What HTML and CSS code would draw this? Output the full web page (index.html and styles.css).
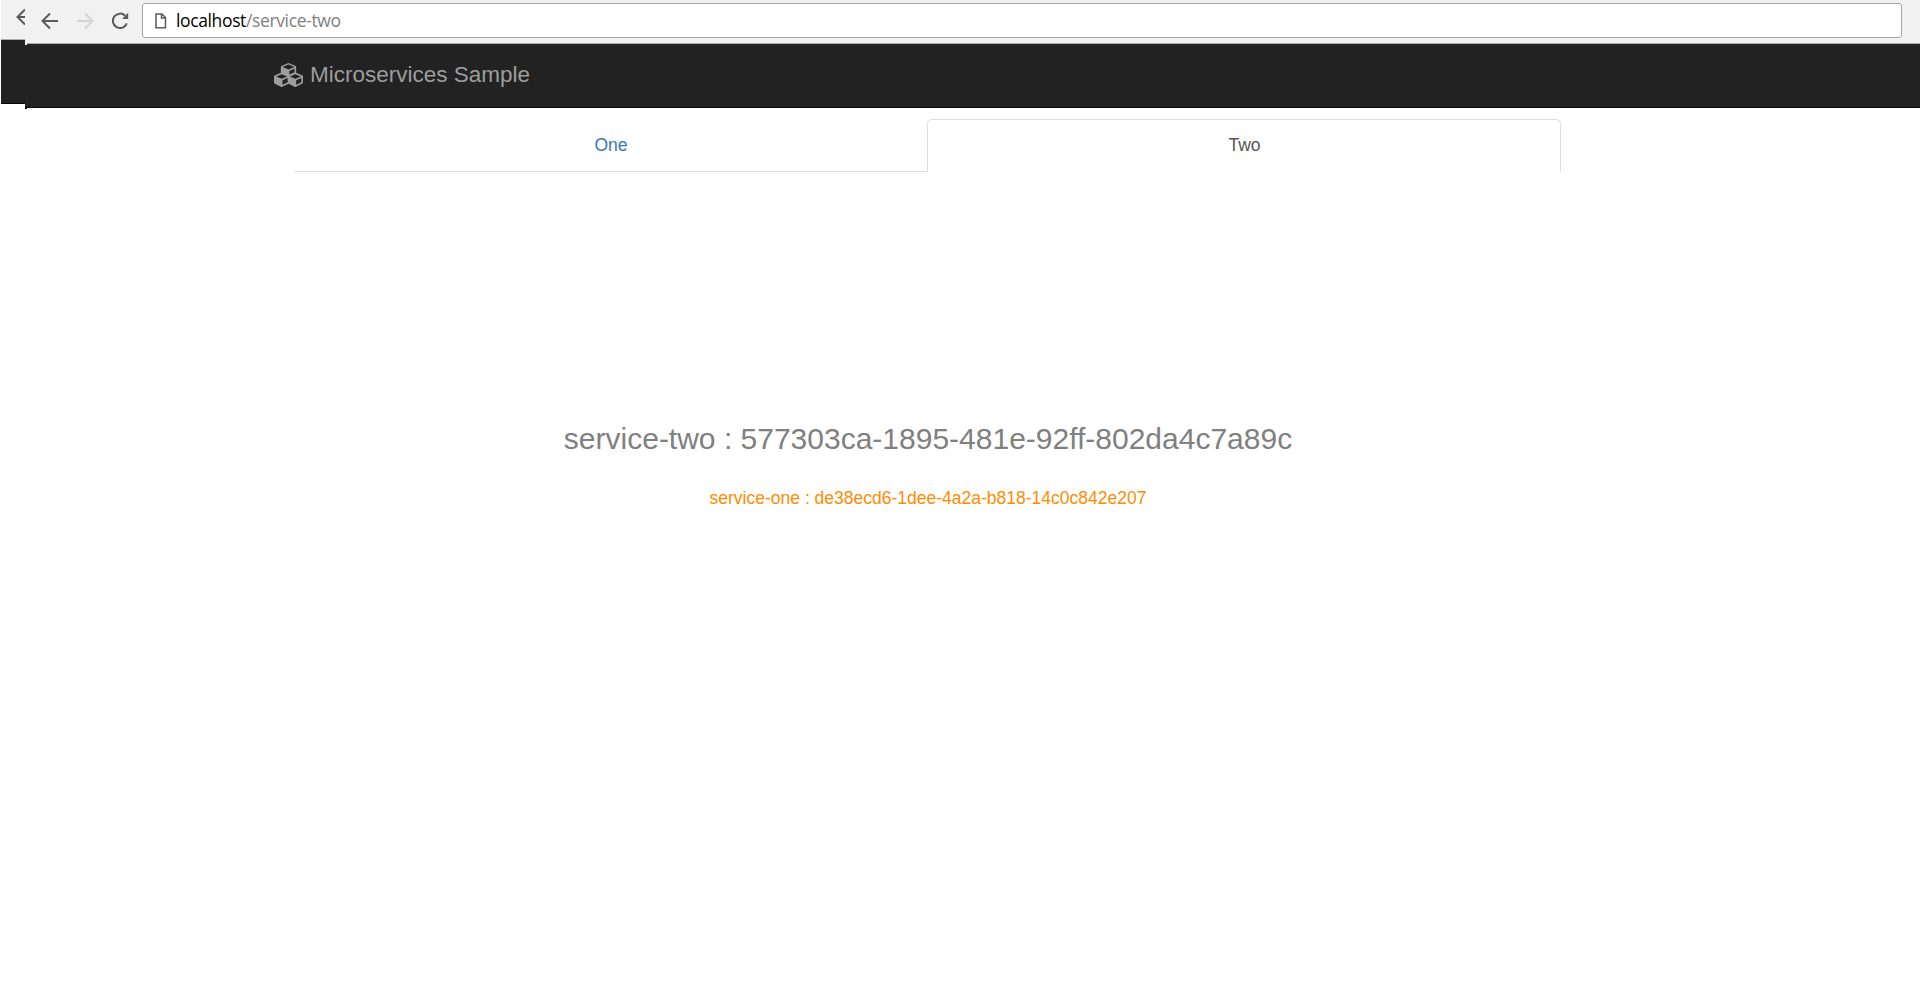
FILE: index.html
```html
<!DOCTYPE html>
<html lang="en">
<head>
<meta charset="utf-8">
<title>Microservices Sample</title>
<link rel="stylesheet" href="styles.css">
</head>
<body>
<header class="toolbar">
  <svg class="back" width="18" height="18" viewBox="0 0 18 18"><path d="M17 9H2M9 1.5L1.5 9L9 16.5"/></svg>
  <svg class="forward" width="18" height="18" viewBox="0 0 18 18"><path d="M1 9H16M9 1.5L16.5 9L9 16.5"/></svg>
  <svg class="reload" width="18" height="18" viewBox="0 0 18 18"><path d="M14.2 3.8A7.2 7.2 0 1 0 15.8 11.3"/><path class="solid" d="M17.2 0.8V7H11Z"/></svg>
  <div class="address">
    <svg class="page" width="12" height="16" viewBox="0 0 12 16"><path d="M1 1H7L10.5 4.5V14.8H1ZM6.5 1V5H10.5"/></svg>
    <span class="url">localhost<span class="path">/service-two</span></span>
  </div>
</header>
<nav class="navbar">
  <svg class="cubes" width="29" height="24" viewBox="0 0 2176 1792" preserveAspectRatio="none"><path fill-rule="evenodd" d="M640 1632l384-192v-314l-384 164v342zM576 1178l404-173-404-173-404 173zM1664 1632l384-192v-314l-384 164v342zM1600 1178l404-173-404-173-404 173zM1152 861l384-165v-266l-384 164v267zM1088 482l441-189-441-189-441 189zM2176 1024v416q0 36-19 67t-52 47l-448 224q-25 14-57 14t-57-14l-448-224q-5-2-7-4-2 2-7 4l-448 224q-25 14-57 14t-57-14l-448-224q-33-16-52-47t-19-67v-416q0-38 21.5-70t56.5-48l434-186v-400q0-38 21.5-70t56.5-48l448-192q23-10 50-10t50 10l448 192q35 16 56.5 48t21.5 70v400l434 186q36 16 57 48t21 70z"/></svg>
  <span class="brand">Microservices Sample</span>
</nav>
<main class="content">
  <div class="tabs">
    <a class="tab">One</a>
    <a class="tab active">Two</a>
  </div>
  <div class="result">
    <div class="primary">service-two : 577303ca-1895-481e-92ff-802da4c7a89c</div>
    <div class="secondary">service-one : de38ecd6-1dee-4a2a-b818-14c0c842e207</div>
  </div>
</main>
<div class="sliver">
  <div class="sliver-toolbar"><svg width="9" height="18" viewBox="0 0 9 18"><path d="M10 9H2M9 1.5L1.5 9L9 16.5"/></svg></div>
  <div class="sliver-navbar"></div>
</div>
<div class="notch"></div>
</body>
</html>
```
FILE: styles.css
```css
* { box-sizing: border-box; }
body {
  margin: 0;
  height: 989px;
  overflow: hidden;
  position: relative;
  background: #fff;
  font-family: "Liberation Sans", Arial, sans-serif;
}
svg { display: block; flex: none; fill: none; stroke: #5a5a5a; stroke-width: 2; }
.toolbar {
  height: 44px;
  padding: 3px 18px 6px 41px;
  display: flex;
  align-items: flex-start;
  background: #f1f1f1;
  border-bottom: 1px solid #a9abac;
}
.back { margin-top: 9px; }
.forward { margin: 9px 0 0 17px; stroke: #d2d2d2; }
.reload { margin: 9px 0 0 17px; }
.solid { fill: #5a5a5a; stroke: none; }
.address {
  flex: 1;
  height: 35px;
  margin-left: 13px;
  padding-left: 12px;
  display: flex;
  align-items: center;
  background: #fff;
  border: 1px solid #a6a6a6;
  border-radius: 3px;
}
.page { stroke-width: 1.5; }
.url {
  margin-left: 9px;
  font: 17.5px/33px "Open Sans", sans-serif;
  letter-spacing: -0.37px;
  color: #000;
  white-space: nowrap;
}
.path { color: #808080; }
.navbar {
  height: 64px;
  padding: 0 0 2px 274px;
  display: flex;
  align-items: center;
  background: #222;
  border-bottom: 1px solid #080808;
}
.cubes { fill: #9d9d9d; stroke: none; }
.brand { margin-left: 7px; font-size: 22.5px; color: #9d9d9d; white-space: nowrap; }
.content { padding-top: 11px; }
.tabs { display: grid; grid-template-columns: 633px 634px; width: 1267px; margin-left: 294px; }
.tab {
  height: 53px;
  padding-left: 1px;
  font-size: 17.5px;
  line-height: 52px;
  text-align: center;
  color: #337ab7;
  border-bottom: 1px solid #ddd;
}
.active {
  color: #555;
  border: 1px solid #ddd;
  border-bottom-color: transparent;
  border-radius: 5px 5px 0 0;
  line-height: 50px;
}
.result { width: 1268px; margin-left: 294px; padding-top: 249px; text-align: center; }
.primary { font-size: 30px; line-height: 36px; color: #808080; }
.secondary { margin-top: 30px; font-size: 17.5px; line-height: 22px; color: #ff8c00; }
.sliver { position: absolute; left: 0; top: 0; width: 25px; height: 109px; padding-left: 1px; background: #fff; }
.sliver-toolbar { height: 40px; padding: 8px 0 0 15px; overflow: hidden; background: #f1f1f1; border-bottom: 1px solid #a9abac; }
.sliver-navbar { height: 64px; background: #222; border-bottom: 1px solid #080808; }
.notch { position: absolute; left: 25px; top: 43px; width: 2px; height: 66px; background: #222; border-top: 2px solid #f1f1f1; border-bottom: 2px solid #080808; }
```
